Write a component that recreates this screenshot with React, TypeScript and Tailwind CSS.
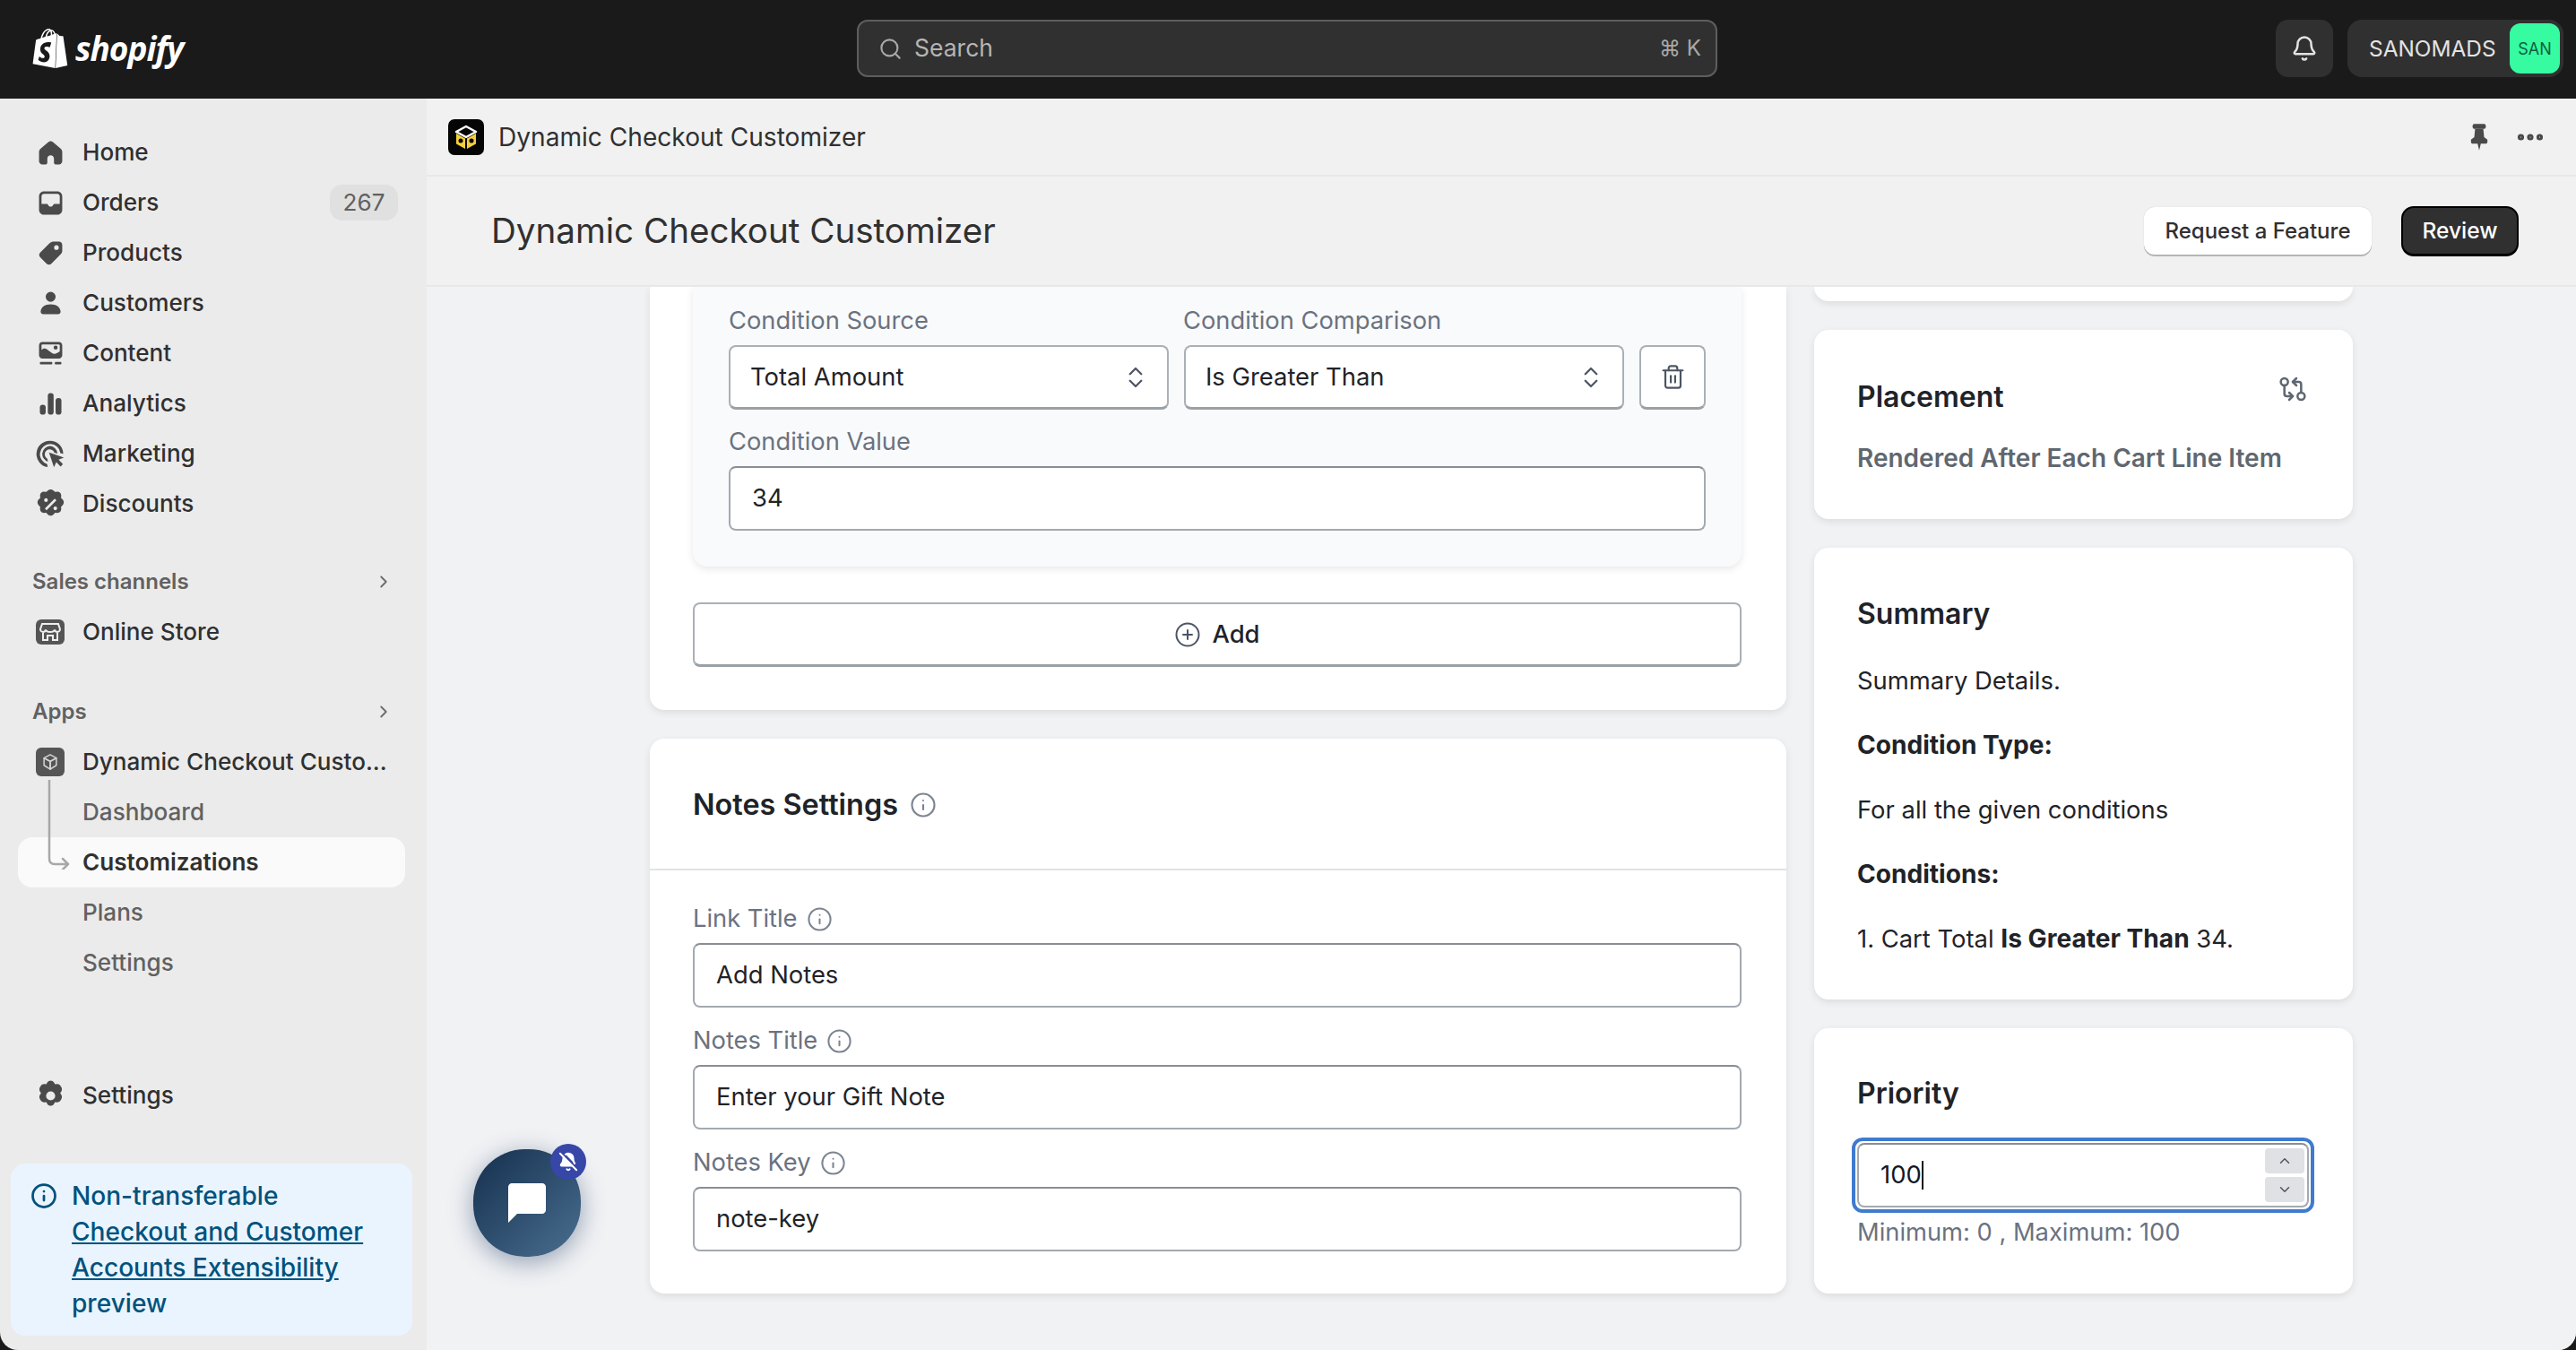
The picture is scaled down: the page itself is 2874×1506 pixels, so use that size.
import React from "react";
import { Bell, BellOff, ChevronDown, ChevronRight, ChevronUp, ChevronsUpDown, CirclePlus, GitCompareArrows, Info, MoreHorizontal, Search, Trash2 } from "lucide-react";
import { SiShopify } from "react-icons/si";

const Icon = ({ children }: { children: React.ReactNode }) => (
  <svg viewBox="0 0 20 20" className="w-[37px] h-[37px] fill-[#4a4a4a] shrink-0">
    {children}
  </svg>
);

const CubeLines = ({ stroke, fill }: { stroke: string; fill: string }) => (
  <g fill={fill} stroke={stroke} strokeWidth="1.2" strokeLinejoin="round">
    <path d="M10 3.5 15.5 6.5 10 9.5 4.5 6.5Z" fill="none" />
    <path d="M4.5 6.5V13L10 16.5V9.5Z" />
    <path d="M15.5 6.5V13L10 16.5V9.5Z" />
  </g>
);

const icons: Record<string, React.ReactNode> = {
  home: <path d="M10 3c-.5 0-1 .2-1.400.5L4 7.400C3.400 8 3 8.700 3 9.500V15c0 1.100.9 2 2 2h2c.6 0 1-.4 1-1v-2.500c0-1.100.9-2 2-2s2 .9 2 2V16c0 .6.4 1 1 1h2c1.100 0 2-.9 2-2V9.500c0-.8-.4-1.500-1-2.100l-4.600-3.900C11 3.200 10.500 3 10 3Z" />,
  orders: <path fillRule="evenodd" d="M6 3h8c1.700 0 3 1.300 3 3v8c0 1.700-1.300 3-3 3H6c-1.700 0-3-1.300-3-3V6c0-1.700 1.300-3 3-3Zm-1.500 7.500h3c.5 0 .8.300 1 .7.300.6.800 1 1.500 1s1.200-.4 1.500-1c.2-.4.500-.7 1-.7h3V6c0-.8-.7-1.500-1.500-1.500H6C5.200 4.500 4.500 5.200 4.500 6v4.500Z" />,
  products: <path fillRule="evenodd" d="M12 3h3c1.100 0 2 .9 2 2v3.500c0 .8-.3 1.500-.9 2.100l-5.700 5.700c-.8.800-2 .8-2.800 0l-3.900-3.900c-.8-.8-.8-2 0-2.800L9.400 3.900C10.100 3.300 11 3 12 3Zm1.500 5a1.400 1.400 0 1 0 0-2.800 1.400 1.400 0 0 0 0 2.800Z" />,
  customers: <path d="M10 3a3 3 0 1 1 0 6 3 3 0 0 1 0-6ZM10 10.500c-3.600 0-6 1.900-6 4.500 0 .8.600 1.500 1.500 1.500h9c.9 0 1.500-.7 1.500-1.500 0-2.600-2.400-4.500-6-4.500Z" />,
  content: (
    <>
      <path fillRule="evenodd" d="M5 3h10c1.100 0 2 .9 2 2v6c0 1.100-.9 2-2 2H5c-1.100 0-2-.9-2-2V5c0-1.100.9-2 2-2Zm0 1.500c-.3 0-.5.2-.5.5v2.700C5.500 6.600 6.800 6.600 8 7.500c1.400 1 2.800 2.200 3.600 2.500 1.200.4 2.700-.4 3.900-1.300V5c0-.3-.2-.5-.5-.5H5Zm8 3a1.200 1.200 0 1 0 0-2.400 1.200 1.200 0 0 0 0 2.400Z" />
      <rect x="3.500" y="15" width="7.500" height="1.500" rx=".5" />
      <rect x="12.500" y="15" width="4" height="1.500" rx=".5" />
    </>
  ),
  analytics: (
    <>
      <rect x="3.500" y="10.500" width="3.500" height="6" rx="1.700" />
      <rect x="8.300" y="3.500" width="3.500" height="13" rx="1.700" />
      <rect x="13" y="6.500" width="3.500" height="10" rx="1.700" />
    </>
  ),
  marketing: (
    <>
      <path d="M9.500 2a8 8 0 0 0-1.300 15.900l-.3-1.800a6.200 6.200 0 1 1 8-6.700l1.700.4A8 8 0 0 0 9.500 2Z" />
      <path d="M9.600 5.200a4.800 4.800 0 0 0-1.200 9.400l-.4-1.800a3 3 0 1 1 4.300-3.600l1.800.5a4.800 4.800 0 0 0-4.500-4.500Z" />
      <path d="M9 9l9 3.100-3.200 1.300 2.600 2.700-1.400 1.400-2.600-2.700-1.400 3.200Z" />
    </>
  ),
  discounts: <path fillRule="evenodd" transform="translate(10 10) scale(1.120) translate(-10 -10)" d="M8.500 2.600c.8-.8 2.200-.8 3 0l.9.800 1.300-.1c1.100 0 2 .9 2 2l-.1 1.300.9.900c.8.800.8 2.200 0 3l-.9.900.1 1.300c0 1.100-.9 2-2 2l-1.300-.1-.9.900c-.8.800-2.200.8-3 0l-.9-.9-1.300.1c-1.100 0-2-.9-2-2l.1-1.300-.9-.9c-.8-.8-.8-2.200 0-3l.9-.9-.1-1.300c0-1.100.9-2 2-2l1.300.1.900-.8ZM7.500 8.800a1 1 0 1 0 0-2 1 1 0 0 0 0 2Zm5 4.400a1 1 0 1 0 0-2 1 1 0 0 0 0 2Zm.6-5.300-.9-.9-5.300 5.300.9.900 5.300-5.300Z" />,
  settings: <path fillRule="evenodd" transform="translate(10 10) scale(1.250) translate(-10 -10)" d="M8.400 3.500c.3-.6 1-.9 1.600-.9s1.300.3 1.600.9l.5.9 1-.1c.7 0 1.300.3 1.700.9l.4.7c.3.600.3 1.300 0 1.900l-.6.9.6.900c.3.600.3 1.300 0 1.900l-.4.700c-.4.600-1 .9-1.700.9l-1-.1-.5.900c-.3.600-1 .9-1.600.9s-1.300-.3-1.600-.9l-.5-.9-1 .1c-.7 0-1.300-.3-1.700-.9l-.4-.7c-.3-.6-.3-1.300 0-1.900l.6-.9-.6-.9c-.3-.6-.3-1.300 0-1.900l.4-.7c.4-.6 1-.9 1.700-.9l1 .1.500-.9ZM10 12.200a2.200 2.200 0 1 0 0-4.400 2.200 2.200 0 0 0 0 4.400Z" />,
};

const NavRow = ({ icon, label, badge }: { icon: string; label: string; badge?: string }) => (
  <div className="flex items-center h-14 pl-[38px] pr-8 text-[#303030] font-medium">
    <Icon>{icons[icon]}</Icon>
    <span className="ml-[17px]">{label}</span>
    {badge && (
      <span className="ml-auto h-10 w-[76px] rounded-[14px] bg-[#e0e0e0] flex items-center justify-center text-[#616161] font-normal">
        {badge}
      </span>
    )}
  </div>
);

const SectionHead = ({ label }: { label: string }) => (
  <div className="flex items-center justify-between h-14 pl-9 pr-[37px] text-[#616161] text-[24px] font-semibold">
    <span>{label}</span>
    <ChevronRight size={22} strokeWidth={2} className="text-[#6b6b6b]" />
  </div>
);

const SubRow = ({ label }: { label: string }) => (
  <div className="flex items-center h-14 pl-[92px] text-[#616161] font-medium">{label}</div>
);

const Sidebar = () => (
  <aside className="w-[476px] shrink-0 bg-[#ebebeb] flex flex-col pt-[32px] text-[26.1px]">
    <NavRow icon="home" label="Home" />
    <NavRow icon="orders" label="Orders" badge="267" />
    <NavRow icon="products" label="Products" />
    <NavRow icon="customers" label="Customers" />
    <NavRow icon="content" label="Content" />
    <NavRow icon="analytics" label="Analytics" />
    <NavRow icon="marketing" label="Marketing" />
    <NavRow icon="discounts" label="Discounts" />

    <div className="mt-[31px]">
      <SectionHead label="Sales channels" />
      <div className="flex items-center h-14 pl-10 text-[#303030] font-medium">
        <svg viewBox="0 0 32 28" className="w-8 h-[28px] shrink-0">
          <rect width="32" height="28" rx="6" fill="#555555" />
          <path d="M7 5h18l2 6c0 1.700-1.500 3-3 3s-2.700-1-3-2.500c-.4 1.500-1.800 2.500-5 2.500s-4.600-1-5-2.500C10.700 13 9.500 14 8 14s-3-1.300-3-3Z" fill="none" stroke="#eeeeee" strokeWidth="2" />
          <path d="M8 15v8h5v-5h6v5h5v-8" fill="none" stroke="#eeeeee" strokeWidth="2" />
        </svg>
        <span className="ml-[20px]">Online Store</span>
      </div>
    </div>

    <div className="mt-[33px] relative">
      <SectionHead label="Apps" />
      <div className="flex items-center h-14 pl-10 text-[#303030] font-medium">
        <svg viewBox="0 0 32 32" className="w-8 h-8 shrink-0">
          <rect width="32" height="32" rx="6" fill="#555555" />
          <g transform="translate(3.500 3.500) scale(1.250)">
            <CubeLines stroke="#d4d4d4" fill="none" />
          </g>
        </svg>
        <span className="ml-[20px] whitespace-nowrap">Dynamic Checkout Custo...</span>
      </div>
      <SubRow label="Dashboard" />
      <div className="flex items-center h-14 ml-5 mr-6 pl-[72px] rounded-[16px] bg-[#fafafa] text-[#303030] font-semibold">
        Customizations
      </div>
      <SubRow label="Plans" />
      <SubRow label="Settings" />
      <svg className="absolute left-[50px] top-[104px] w-[32px] h-[100px] pointer-events-none" viewBox="0 0 32 100" fill="none" stroke="#a8a8a8" strokeWidth="2.500" strokeLinecap="round" strokeLinejoin="round">
        <path d="M5 0V88Q5 94 11 94H26M20 88l6 6-6 6" />
      </svg>
    </div>

    <div className="mt-[92px]">
      <NavRow icon="settings" label="Settings" />
    </div>

    <div className="mt-[48px] ml-3 mr-4 rounded-[16px] bg-[#eaf4ff] pl-[22px] py-4 flex items-start gap-4 text-[#00527c] text-[28.1px] font-medium leading-10">
      <Info size={30} strokeWidth={2.200} className="mt-[5px] shrink-0" />
      <p className="w-[350px]">
        Non-transferable <span className="underline">Checkout and Customer Accounts Extensibility</span> preview
      </p>
    </div>
  </aside>
);

const Label = ({ text, info }: { text: string; info?: boolean }) => (
  <div className="flex items-center gap-[10px] h-9 text-[#6b7280] text-[27.3px]">
    {text}
    {info && <Info size={29} strokeWidth={1.700} className="text-[#7b8490]" />}
  </div>
);

const TextField = ({ value }: { value: string }) => (
  <div className="h-[72px] flex items-center px-6 bg-white rounded-[8px] border-2 border-[#a3a9b0] border-t-[#898e94] text-[#1f2328] text-[27.4px]">
    {value}
  </div>
);

const SelectBox = ({ value }: { value: string }) => (
  <div className="flex-1 h-[72px] flex items-center justify-between pl-[22px] pr-5 bg-white rounded-[8px] border-2 border-[#aab0b6] border-b-[3px] border-b-[#9aa0a6] text-[#1f2328] text-[27.4px]">
    {value}
    <ChevronsUpDown size={30} strokeWidth={1.800} className="text-[#4b5563]" />
  </div>
);

const Card = ({ className, children }: { className: string; children?: React.ReactNode }) => (
  <div className={`bg-white shadow-[0_3px_8px_rgba(0,0,0,0.09)] ${className}`}>{children}</div>
);

const CardTitle = ({ text }: { text: string }) => (
  <h2 className="h-12 flex items-center text-[#1f2328] text-[32px] font-semibold">{text}</h2>
);

const NotesField = ({ label, value }: { label: string; value: string }) => (
  <div>
    <Label text={label} info />
    <div className="mt-[9px]">
      <TextField value={value} />
    </div>
  </div>
);

const Content = () => (
  <div className="flex-1 min-h-0 overflow-hidden bg-[#f1f2f4] flex items-start pl-[249px] gap-[31px]">
    <div className="w-[1268px] flex flex-col gap-8">
      <Card className="rounded-b-[16px] pl-12 pr-[50px] pb-12">
        <div className="rounded-b-[16px] bg-[#f9fafb] shadow-[0_3px_8px_rgba(0,0,0,0.09)] pl-10 pr-10 pt-[20px] pb-10">
          <div className="flex gap-[17px]">
            <div className="w-[490px]"><Label text="Condition Source" /></div>
            <Label text="Condition Comparison" />
          </div>
          <div className="mt-[9px] flex gap-[17px]">
            <SelectBox value="Total Amount" />
            <SelectBox value="Is Greater Than" />
            <div className="w-[74px] h-[72px] flex items-center justify-center bg-white rounded-[8px] border-2 border-[#aab0b6] border-b-[3px] border-b-[#9aa0a6]">
              <Trash2 size={29} strokeWidth={1.800} className="text-[#4b5563]" />
            </div>
          </div>
          <div className="mt-[18px]"><Label text="Condition Value" /></div>
          <div className="mt-[9px]"><TextField value="34" /></div>
        </div>
        <div className="mt-10 h-[72px] flex items-center justify-center gap-3 bg-white rounded-[8px] border-2 border-[#aab0b6] border-b-[3px] border-b-[#9aa0a6] text-[#1f2328] text-[27.4px] font-medium">
          <CirclePlus size={30} strokeWidth={1.600} className="text-[#4b5563]" />
          Add
        </div>
      </Card>

      <Card className="rounded-[16px]">
        <div className="h-[147px] border-b-2 border-[#e1e3e5] pl-12 pr-[50px] pt-[3px] flex items-center gap-[13px]">
          <span className="text-[#1f2328] text-[32.4px] font-semibold">Notes Settings</span>
          <Info size={30} strokeWidth={1.700} className="text-[#7b8490]" />
        </div>
        <div className="pl-12 pr-[50px] pt-[36px] pb-[47px] flex flex-col gap-[19px]">
          <NotesField label="Link Title" value="Add Notes" />
          <NotesField label="Notes Title" value="Enter your Gift Note" />
          <NotesField label="Notes Key" value="note-key" />
        </div>
      </Card>
    </div>

    <div className="w-[601px] flex flex-col gap-8">
      <Card className="rounded-b-[16px] h-4" />

      <Card className="rounded-[16px] px-12 pt-[51px] pb-[50px]">
        <div className="flex items-start justify-between">
          <CardTitle text="Placement" />
          <GitCompareArrows size={32} strokeWidth={1.900} className="text-[#5f6770] mr-[3px] -mt-[1px]" />
        </div>
        <p className="mt-[26px] leading-9 text-[#5f6770] text-[28px] font-semibold">Rendered After Each Cart Line Item</p>
      </Card>

      <Card className="rounded-[16px] px-12 pt-[50px] pb-[50px]">
        <CardTitle text="Summary" />
        <div className="mt-[32px] flex flex-col gap-9 leading-9 text-[#1f2328] text-[27.4px]">
          <p>Summary Details.</p>
          <p className="font-bold text-[28.1px]">Condition Type:</p>
          <p>For all the given conditions</p>
          <p className="font-bold text-[28.1px]">Conditions:</p>
          <p>1. Cart Total <b className="text-[28.1px]">Is Greater Than</b> 34.</p>
        </div>
      </Card>

      <Card className="rounded-[16px] px-12 pt-[49px] pb-[50px]">
        <CardTitle text="Priority" />
        <div className="mt-[25px] -ml-[6px] -mr-[5px] h-[84px] rounded-[12px] border-[4px] border-[#3f7bcf] p-[2px]">
          <div className="h-full rounded-[8px] border-2 border-[#a3a9b0] border-t-[#898e94] bg-white flex items-center pl-[24px] pr-[3px] text-[#111827] text-[27.4px]">
            <span>100</span>
            <span className="w-[2px] h-8 bg-[#111111]" />
            <div className="ml-auto w-[44px] flex flex-col gap-1">
              <div className="h-7 rounded-[4px] bg-[#dfe1e4] flex items-center justify-center">
                <ChevronUp size={18} strokeWidth={2} className="text-[#4b5563]" />
              </div>
              <div className="h-7 rounded-[4px] bg-[#dfe1e4] flex items-center justify-center">
                <ChevronDown size={18} strokeWidth={2} className="text-[#4b5563]" />
              </div>
            </div>
          </div>
        </div>
        <p className="mt-1 leading-9 text-[#6b7280] text-[27.3px]">Minimum: 0 , Maximum: 100</p>
      </Card>
    </div>
  </div>
);

const TopBar = () => (
  <header className="h-[110px] shrink-0 bg-[#1a1a1a] flex items-center relative pl-[34px] pr-[14px] pb-[2px]">
    <div className="w-[922px] flex items-center">
      <SiShopify size={44} className="text-white" />
      <span className="ml-[6px] text-white text-[37px] font-bold italic tracking-[-1px] font-['Open_Sans',sans-serif]">shopify</span>
    </div>
    <div className="w-[960px] h-16 rounded-[12px] border-2 border-[#5e5e5e] bg-[#303030] flex items-center pl-[22px] pr-4 text-[#b5b5b5] text-[26.5px]">
      <Search size={27} strokeWidth={1.900} className="text-[#a8a8a8]" />
      <span className="ml-[13px]">Search</span>
      <span className="ml-auto text-[#a8a8a8] text-[24px]">⌘ K</span>
    </div>
    <div className="ml-auto flex items-center gap-4">
      <div className="w-16 h-16 rounded-[14px] bg-[#303030] flex items-center justify-center">
        <Bell size={30} strokeWidth={2} className="text-[#e3e3e3]" />
      </div>
      <div className="w-[241px] h-16 rounded-[16px] bg-[#303030] flex items-center justify-between pl-6 pr-1 text-[#e3e3e3] text-[24.4px]">
        <span>SANOMADS</span>
        <span className="w-14 h-14 rounded-[12px] bg-[#36fba1] text-[#0e5f3d] text-[18px] flex items-center justify-center">SAN</span>
      </div>
    </div>
  </header>
);

const AppIcon = () => (
  <svg viewBox="0 0 40 40" className="w-10 h-10 shrink-0">
    <rect width="40" height="40" rx="7" fill="#050505" />
    <path d="M20 8 31 14 20 20 9 14Z" fill="#050505" stroke="#ffffff" strokeWidth="2.500" strokeLinejoin="round" />
    <path d="M9 16 19 21.500V33L9 27.500Z" fill="#f5cf3a" />
    <path d="M31 16 21 21.500V33L31 27.500Z" fill="#f5cf3a" />
    <circle cx="14" cy="24" r="2.500" fill="#050505" />
    <circle cx="26" cy="24" r="2.500" fill="#050505" />
  </svg>
);

const PinIcon = () => (
  <svg viewBox="0 0 24 32" className="w-[22px] h-[30px] fill-[#4a4a4a]">
    <rect x="4" y="0" width="16" height="6" rx="2" />
    <path d="M7 6h10l1 10 4 3v3c0 1-1 2-2 2H14l-2 8-2-8H4c-1 0-2-1-2-2v-3l4-3Z" />
  </svg>
);

const App = () => (
  <div className="h-[1506px] w-full bg-[#1a1a1a] overflow-hidden flex flex-col font-['Inter',sans-serif]">
    <TopBar />
    <div className="flex-1 min-h-0 flex rounded-b-[20px] overflow-hidden relative">
      <Sidebar />
      <main className="flex-1 min-w-0 flex flex-col bg-[#f1f1f1]">
        <div className="h-[87px] shrink-0 border-b-2 border-[#e8e8e8] flex items-center pl-6 pr-[33px]">
          <AppIcon />
          <span className="ml-4 mt-[2px] text-[#303030] text-[28.1px]">Dynamic Checkout Customizer</span>
          <div className="ml-auto flex items-center gap-[28px]">
            <PinIcon />
            <MoreHorizontal size={36} strokeWidth={2.800} className="text-[#4a4a4a]" />
          </div>
        </div>
        <div className="h-[123px] shrink-0 border-b-2 border-[#e8e8e8] flex items-center pl-[72px] pr-[64px]">
          <h1 className="text-[#303030] text-[38.6px]">Dynamic Checkout Customizer</h1>
          <div className="ml-auto flex items-center gap-[33px]">
            <button className="h-[53px] w-[254px] rounded-[12px] bg-white text-[#303030] text-[24px] font-medium shadow-[0_2px_0_#b5b5b5,0_0_1px_#b5b5b5]">
              Request a Feature
            </button>
            <button className="h-[56px] w-[131px] rounded-[14px] bg-[#303030] border-2 border-black border-b-[3px] text-white text-[24.5px] font-medium">
              Review
            </button>
          </div>
        </div>
        <Content />
      </main>
      {/* floating chat launcher */}
      <div className="absolute left-[528px] top-[1172px] w-[120px] h-[120px] rounded-[48%] bg-gradient-to-br from-[#16304f] to-[#4a6f90] shadow-[0_6px_28px_rgba(30,58,100,0.45)] flex items-center justify-center">
        <svg viewBox="0 0 42 44" className="w-[42px] h-[44px] fill-white">
          <path d="M4 0h34c2 0 4 2 4 4v26c0 2-2 4-4 4H10L0 44V4C0 2 2 0 4 0Z" />
        </svg>
        <div className="absolute left-[86px] -top-[6px] w-10 h-10 rounded-full bg-[#3747a8] flex items-center justify-center">
          <BellOff size={22} strokeWidth={2.200} className="text-white fill-white" />
        </div>
      </div>
    </div>
  </div>
);

export default App;
